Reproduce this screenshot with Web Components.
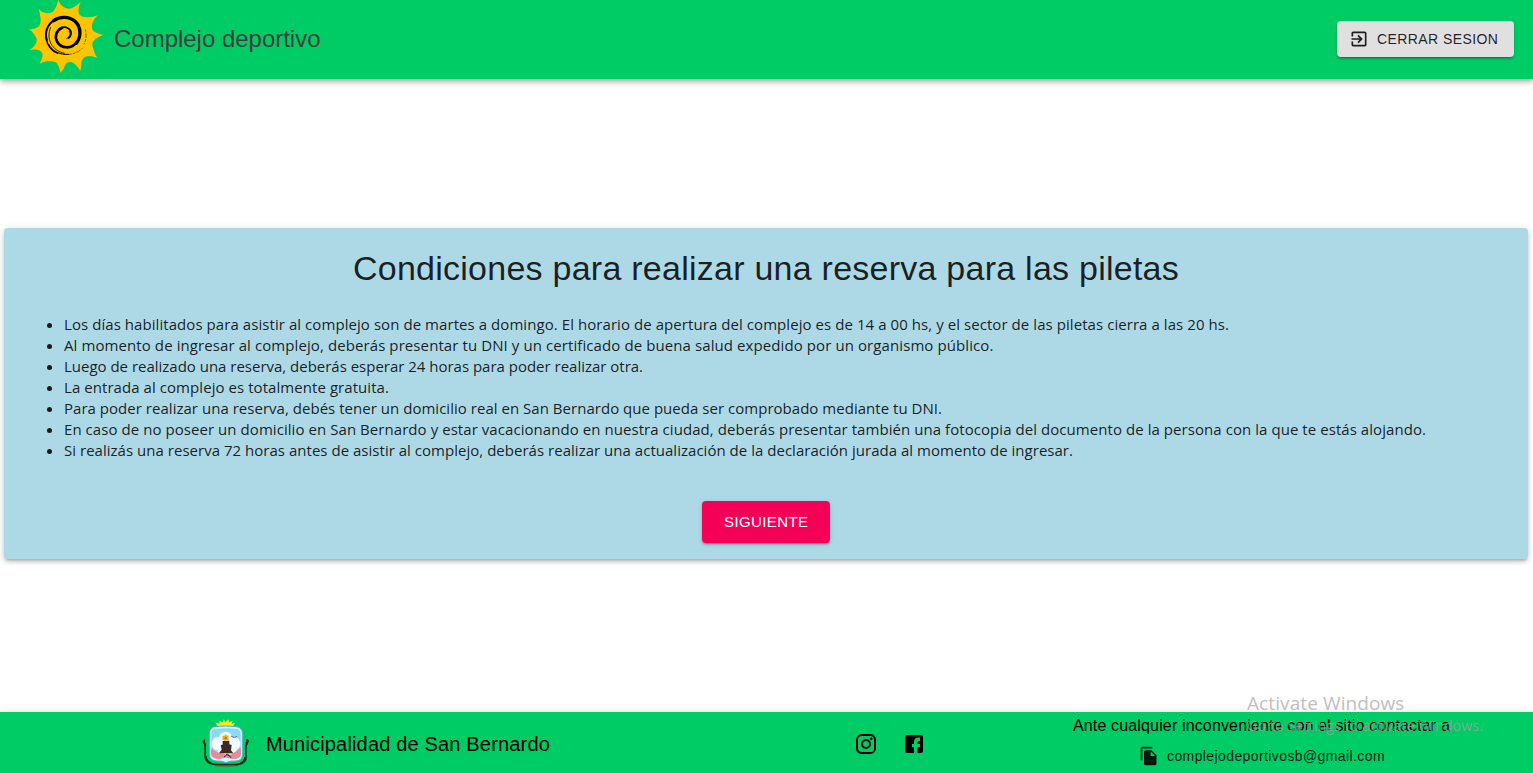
<!DOCTYPE html>
<html lang="es">
<head>
<meta charset="utf-8">
<title>Complejo deportivo</title>
<style>
html,body{margin:0;height:100%;overflow:hidden;background:#fff;font-family:"Liberation Sans",Arial,sans-serif}
</style>
</head>
<body>
<sports-app></sports-app>
<script>
const define=(name,html,init)=>customElements.define(name,class extends HTMLElement{
  constructor(){super();const t=document.createElement('template');t.innerHTML=html;
    this.attachShadow({mode:'open'}).append(t.content.cloneNode(true));}
  connectedCallback(){if(init)init(this);}
});

/* One line of text, tracked so that it fills the width given in its "w" attribute. */
define('fit-text','<style>:host{display:inline-block;white-space:nowrap}</style><slot></slot>',el=>{
  const w=parseFloat(el.getAttribute('w'));
  el.style.letterSpacing='0px';
  const n=el.textContent.length,natural=el.getBoundingClientRect().width;
  if(natural)el.style.letterSpacing=((w-natural)/n).toFixed(4)+'px';
});

define('sun-logo',`<style>:host{display:block;width:84px;height:80px}svg{display:block}</style>
<svg width="84" height="80" viewBox="0 0 252 240" fill="none">
<path fill="#ffc400" d="M86 36Q98 22 103 -1Q107 14 118 20Q127 27 138 26Q153 22 170 6Q161 22 164 38Q167 50 184 51Q202 54 222 46Q207 58 204 76Q201 90 213 96Q223 102 238 105Q221 110 211 120Q201 128 207 143Q210 159 220 174Q201 165 188 169Q174 174 172 188Q172 199 169 213Q157 192 142 186Q128 184 123 196Q120 209 109 219Q107 199 96 187Q86 182 70 184Q58 185 46 191Q57 177 56 163Q53 151 39 149Q28 147 16 151Q30 143 36 130Q42 117 32 106Q26 95 15 87Q32 89 42 81Q51 73 50 57Q48 40 44 27Q54 38 65 39Q77 41 86 36Z"/>
<path stroke="#000" stroke-width="6" stroke-linecap="round" d="M68 120C61 92 73 63 106 54"/>
<path stroke="#000" stroke-width="10" stroke-linecap="round" d="M89 62C108 48 136 49 153 64C172 82 172 110 157 130"/>
<path stroke="#000" stroke-width="8" stroke-linecap="round" d="M158 127C142 149 111 145 100 126C90 108 98 90 114 83"/>
<path stroke="#000" stroke-width="5" stroke-linecap="round" d="M106 87C125 74 144 88 141 103C140 108 138 111 134 114"/>
<path stroke="#000" stroke-width="2.5" stroke-linecap="round" d="M136 94C140 103 137 110 128 116"/>
<path stroke="#000" stroke-width="4" d="M66 114C71 140 84 154 102 160"/>
<path stroke="#000" stroke-width="2.5" d="M80 82C66 116 82 151 122 160M74 132C84 152 105 165 135 163"/>
<path stroke="#000" stroke-width="1.5" stroke-dasharray="9 3 14 3" d="M90 153C120 170 155 166 174 145M184 88C188 104 187 119 180 133"/>
</svg>`);

define('town-crest',`<style>:host{display:block;width:56px;height:60px}svg{display:block}</style>
<svg width="56" height="60" viewBox="0 0 168 180" fill="none">
<path fill="#f7ed17" d="M60 42L52 28L65 32L64 23L74 28L77 19L83 27L91 19L94 28L104 23L101 32L111 30L104 42Z"/>
<path stroke="#14351a" stroke-width="5" d="M18 80Q23 99 21 124Q19 157 64 155H104Q148 157 144 125Q142 99 148 78"/>
<path stroke="#10230e" stroke-width="4" d="M14 84L23 99M152 82L144 100M24 130Q25 147 49 155M141 132Q140 150 112 156"/>
<path stroke="#735b23" stroke-width="2" d="M50 159Q83 164 119 158"/>
<path fill="#d7f3fb" stroke="#43b4d5" stroke-width="3" d="M50 41Q82 37 116 41Q134 44 134 64V124Q133 144 112 144Q94 143 84 149Q73 143 54 144Q35 142 34 124V62Q34 44 50 41Z"/>
<path fill="#8bdaf0" d="M49 48Q82 44 118 48Q129 51 128 68V117H40V68Q39 51 49 48Z"/>
<ellipse cx="60" cy="92" rx="19" ry="20" fill="#f2fcff"/><ellipse cx="108" cy="92" rx="19" ry="20" fill="#f2fcff"/><circle cx="83" cy="76" r="20" fill="#f2fcff"/><path fill="#f2fcff" d="M52 90H116V120H60Z"/>
<path fill="#e68c96" d="M39 105Q55 121 78 122L91 129L111 117L129 103V122Q128 137 107 138L83 134L60 139Q40 135 39 124Z"/>
<path fill="#412724" d="M74 84L94 83L94 94L101 96L99 112L106 121H63L71 110L68 96L74 95Z"/>
<path fill="#edb51d" d="M82 63L86 67L92 68L91 74L93 80L86 82L82 85L77 81L71 79L74 74L73 68L79 68Z"/><circle cx="83" cy="75" r="4" fill="#a97c1c"/>
<path stroke="#465258" stroke-width="2.5" d="M99 69L109 74L117 70"/>
<path stroke="#3e2329" stroke-width="3" d="M78 132L89 123L100 135M84 124L97 130"/>
</svg>`);

const icons={
 exit:'M10.09 15.59L11.5 17l5-5-5-5-1.41 1.41L12.67 11H3v2h9.67l-2.58 2.59zM19 3H5c-1.11 0-2 .9-2 2v4h2V5h14v14H5v-4H3v4c0 1.1.89 2 2 2h14c1.1 0 2-.9 2-2V5c0-1.1-.9-2-2-2z',
 instagram:'M7.8 2h8.4C19.4 2 22 4.6 22 7.8v8.4a5.8 5.8 0 0 1-5.8 5.8H7.8C4.6 22 2 19.4 2 16.2V7.8A5.8 5.8 0 0 1 7.8 2m-.2 2A3.6 3.6 0 0 0 4 7.6v8.8C4 18.39 5.61 20 7.6 20h8.8a3.6 3.6 0 0 0 3.6-3.6V7.6C20 5.61 18.39 4 16.4 4H7.6m9.65 1.5a1.25 1.25 0 1 1 0 2.5 1.25 1.25 0 0 1 0-2.5M12 7a5 5 0 1 1 0 10 5 5 0 0 1 0-10m0 2a3 3 0 1 0 0 6 3 3 0 0 0 0-6z',
 facebook:'M5 3h14a2 2 0 0 1 2 2v14a2 2 0 0 1-2 2h-3.5v-6.1H18V12h-2.5v-1.6c0-.9.5-1.4 1.3-1.4H18V5.5h-2c-2.3 0-4 1.7-4 4V12h-2v2.9h2V21H5a2 2 0 0 1-2-2V5a2 2 0 0 1 2-2z',
 copy:'M16 1H4c-1.1 0-2 .9-2 2v14h2V3h12V1zm-1 4l6 6v10c0 1.1-.9 2-2 2H7.99C6.89 23 6 22.1 6 21l.01-14c0-1.1.89-2 1.99-2h7zm-1 7h5.5L14 6.5V12z'
};
define('ui-icon','<style>:host{display:block;flex:none;width:var(--size,24px);height:var(--size,24px)}svg{display:block;width:100%;height:100%}</style><svg viewBox="0 0 24 24" fill="currentColor"><path/></svg>',
 el=>el.shadowRoot.querySelector('path').setAttribute('d',icons[el.getAttribute('name')]));

define('ui-button',`<style>:host{display:block}
button{box-sizing:border-box;display:flex;align-items:center;width:100%;height:100%;margin:0;border:0;border-radius:4px;padding:var(--pad);background:var(--bg);color:var(--fg);font:inherit;
box-shadow:0 3px 1px -2px rgba(0,0,0,.2),0 2px 2px rgba(0,0,0,.14),0 1px 5px rgba(0,0,0,.12)}</style><button><slot></slot></button>`);

define('app-header',`<style>
:host{box-sizing:border-box;display:flex;align-items:center;height:79px;padding:0 19px 0 24px;background:#00cc66;position:relative;
box-shadow:0 2px 4px -1px rgba(0,0,0,.2),0 4px 5px rgba(0,0,0,.14),0 1px 10px rgba(0,0,0,.12)}
sun-logo{align-self:flex-start;height:79px}
h6{margin:-2px auto 0 6px;font-size:24px;font-weight:400;line-height:28px;color:#3d3d3d}
ui-button{width:177px;height:36px;margin-top:-1px;font-size:14px;line-height:24px;--bg:#e0e0e0;--fg:rgba(0,0,0,.87);--pad:0 0 0 12px}
ui-icon{--size:20px;margin-right:8px}
</style><sun-logo></sun-logo><h6><fit-text w="206.5">Complejo deportivo</fit-text></h6>
<ui-button><ui-icon name="exit"></ui-icon><fit-text w="121.3">CERRAR SESION</fit-text></ui-button>`);

define('conditions-card',`<style>
:host{box-sizing:border-box;display:flex;flex-direction:column;align-items:center;height:331px;margin:0 5px 0 4px;padding-top:19px;border-radius:4px;background:#add8e6;color:rgba(0,0,0,.87);
box-shadow:0 3px 3px -2px rgba(0,0,0,.2),0 3px 4px rgba(0,0,0,.14),0 1px 8px rgba(0,0,0,.12)}
h4{margin:0;font-size:34px;font-weight:400;line-height:42px}
ul{align-self:stretch;margin:25px 0 40px;padding-left:60px;font:15px/21px "Open Sans","Noto Sans",sans-serif}
li{height:21px}
ui-button{width:128px;height:42px;font-size:15px;line-height:26px;--bg:#f50057;--fg:#fff;--pad:0 0 0 22px}
</style><h4><fit-text w="826">Condiciones para realizar una reserva para las piletas</fit-text></h4>
<ul>
<li><fit-text w="1165">Los días habilitados para asistir al complejo son de martes a domingo. El horario de apertura del complejo es de 14 a 00 hs, y el sector de las piletas cierra a las 20 hs.</fit-text></li>
<li><fit-text w="929.5">Al momento de ingresar al complejo, deberás presentar tu DNI y un certificado de buena salud expedido por un organismo público.</fit-text></li>
<li><fit-text w="579">Luego de realizado una reserva, deberás esperar 24 horas para poder realizar otra.</fit-text></li>
<li><fit-text w="325">La entrada al complejo es totalmente gratuita.</fit-text></li>
<li><fit-text w="878">Para poder realizar una reserva, debés tener un domicilio real en San Bernardo que pueda ser comprobado mediante tu DNI.</fit-text></li>
<li><fit-text w="1362">En caso de no poseer un domicilio en San Bernardo y estar vacacionando en nuestra ciudad, deberás presentar también una fotocopia del documento de la persona con la que te estás alojando.</fit-text></li>
<li><fit-text w="1009">Si realizás una reserva 72 horas antes de asistir al complejo, deberás realizar una actualización de la declaración jurada al momento de ingresar.</fit-text></li>
</ul>
<ui-button><fit-text w="84.5">SIGUIENTE</fit-text></ui-button>`);

define('app-footer',`<style>
:host{display:grid;grid-template-columns:198px 657px 217px 1fr;height:61px;background:#00cc66;color:#000;
box-shadow:0 2px 4px -1px rgba(0,0,0,.2),0 4px 5px rgba(0,0,0,.14),0 1px 10px rgba(0,0,0,.12)}
.town{grid-column:2;display:flex;align-items:center;font-size:20px;line-height:32px}
.town fit-text{margin:2px 0 0 12px}
.social{display:flex;align-items:center;gap:24px;padding-top:4px;height:60px;box-sizing:border-box;margin-left:-1px}
.contact{font-size:16px;line-height:24px;padding-top:2px}
.contact p{margin:0;padding-left:1px}
.mail{display:flex;align-items:center;height:36px;margin-left:67px;font-size:14px;color:rgba(0,0,0,.87)}
.mail ui-icon{--size:20px;margin-right:8px}
</style>
<div class="town"><town-crest></town-crest><fit-text w="284">Municipalidad de San Bernardo</fit-text></div>
<div class="social"><ui-icon name="instagram"></ui-icon><ui-icon name="facebook"></ui-icon></div>
<div class="contact"><p><fit-text w="377">Ante cualquier inconveniente con el sitio contactar a</fit-text></p><div class="mail"><ui-icon name="copy"></ui-icon><fit-text w="218">complejodeportivosb@gmail.com</fit-text></div></div>`);

define('system-watermark',`<style>:host{position:absolute;left:1247px;top:690px;font-family:"Open Sans","Noto Sans",sans-serif;pointer-events:none}
div{white-space:nowrap}.a{font-size:19px;line-height:26px;color:#bfbfbf}.b{font-size:14px;line-height:20px;color:rgba(160,160,160,.78)}</style>
<div class="a"><fit-text w="157.5">Activate Windows</fit-text></div><div class="b"><fit-text w="236">Go to Settings to activate Windows.</fit-text></div>`);

define('sports-app',`<style>:host{display:grid;grid-template-rows:79px 633px 61px;height:773px;width:1533px;position:relative}
main{padding-top:149px}</style><app-header></app-header><main><conditions-card></conditions-card></main><app-footer></app-footer><system-watermark></system-watermark>`);
</script>
</body>
</html>
